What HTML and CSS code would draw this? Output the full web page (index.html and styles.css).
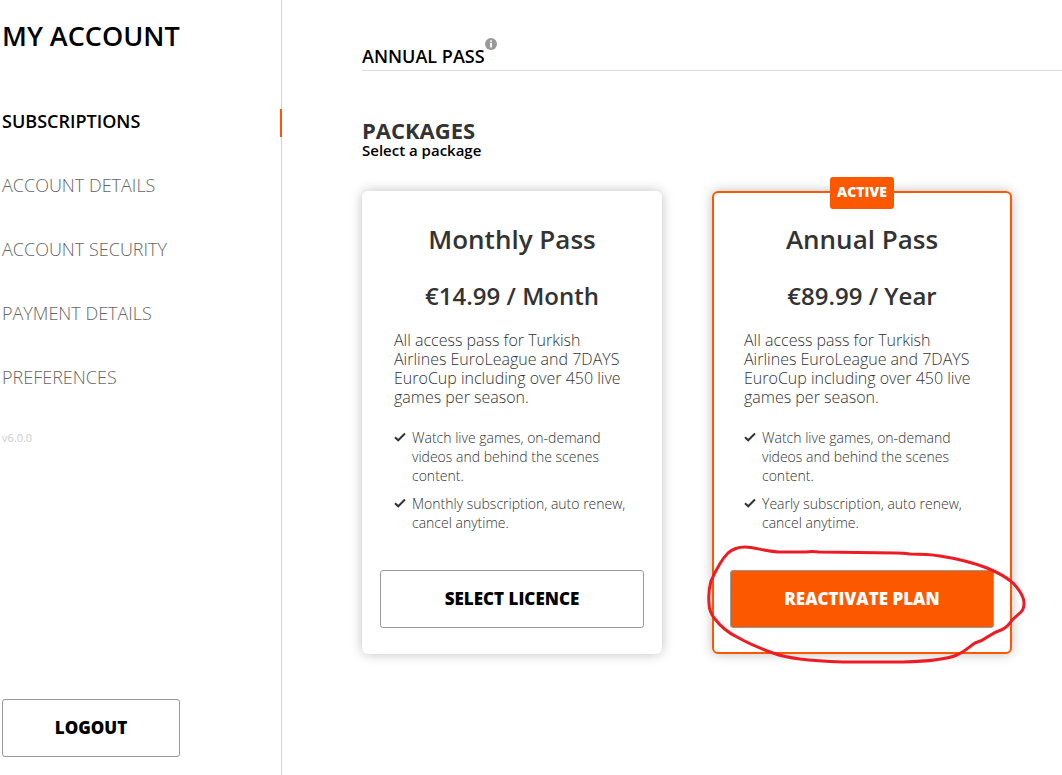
FILE: index.html
```html
<!DOCTYPE html>
<html lang="en">
  <head>
    <meta charset="UTF-8" />
    <meta name="viewport" content="width=device-width, initial-scale=1" />
    <title>My Account</title>
    <link rel="stylesheet" href="styles.css">
  </head>
  <body>
    <div class="account">
      <aside class="sidebar">
        <h1>MY ACCOUNT</h1>
        <nav class="menu">
          <a href="#subscriptions" class="active">SUBSCRIPTIONS</a>
          <a href="#details">ACCOUNT DETAILS</a>
          <a href="#security">ACCOUNT SECURITY</a>
          <a href="#payment">PAYMENT DETAILS</a>
          <a href="#preferences">PREFERENCES</a>
        </nav>
        <p class="version">v6.0.0</p>
        <button type="button" class="btn logout">LOGOUT</button>
      </aside>

      <main class="content">
        <div class="current-plan">
          <h2>ANNUAL PASS</h2>
          <svg class="info" viewBox="0 0 12 12">
            <circle cx="6" cy="6" r="6" fill="#999" />
            <path d="M5.1 2.2h1.8v1.6H5.1zM5.1 4.8h1.8v4.8H5.1z" fill="#fff" />
          </svg>
        </div>

        <h2 class="packages-title">PACKAGES</h2>
        <p class="packages-hint">Select a package</p>

        <div class="packages">
          <section class="card">
            <h3>Monthly Pass</h3>
            <p class="price">€14.99 / Month</p>
            <p class="description">All access pass for Turkish Airlines EuroLeague and 7DAYS EuroCup including over 450 live games per season.</p>
            <ul class="features">
              <li>
                <svg class="check" viewBox="0 0 12 10"><path d="M1 5.2l3.2 3.1L11 1.5" /></svg>
                <span>Watch live games, on-demand videos and behind the scenes content.</span>
              </li>
              <li>
                <svg class="check" viewBox="0 0 12 10"><path d="M1 5.2l3.2 3.1L11 1.5" /></svg>
                <span>Monthly subscription, auto renew, cancel anytime.</span>
              </li>
            </ul>
            <div class="action">
              <button type="button" class="btn">SELECT LICENCE</button>
            </div>
          </section>

          <section class="card card-active">
            <span class="badge">ACTIVE</span>
            <h3>Annual Pass</h3>
            <p class="price">€89.99 / Year</p>
            <p class="description">All access pass for Turkish Airlines EuroLeague and 7DAYS EuroCup including over 450 live games per season.</p>
            <ul class="features">
              <li>
                <svg class="check" viewBox="0 0 12 10"><path d="M1 5.2l3.2 3.1L11 1.5" /></svg>
                <span>Watch live games, on-demand videos and behind the scenes content.</span>
              </li>
              <li>
                <svg class="check" viewBox="0 0 12 10"><path d="M1 5.2l3.2 3.1L11 1.5" /></svg>
                <span>Yearly subscription, auto renew, cancel anytime.</span>
              </li>
            </ul>
            <div class="action">
              <button type="button" class="btn btn-primary">REACTIVATE PLAN</button>
              <svg class="marker" viewBox="0 0 322 122">
                <path d="M39 3C48 3 58 7 72 8L100 8Q106 7 113 8L190 9Q198 9 204 10Q222 10 234 12Q260 16 281 24Q298 31 307 39Q318 51 318 59Q318 65 315 68L306 76Q302 83 295 86Q289 88 283 92Q276 97 269 99C264 102 260 107 251 111Q236 117 197 118L137 118Q110 117 94 115Q78 113 67 109Q45 101 31 93Q17 86 9 75Q3 68 3 59Q2 48 5 37Q14 17 22 9Q29 3 39 3z" />
              </svg>
            </div>
          </section>
        </div>
      </main>
    </div>
  </body>
</html>
```
FILE: styles.css
```css
* {
  box-sizing: border-box;
}

body {
  margin: 0;
  font-family: "Open Sans", "Noto Sans", sans-serif;
  color: #000;
  background-color: #fff;
}

h1,
h2,
h3,
p,
ul {
  margin: 0;
  padding: 0;
}

.account {
  display: flex;
  min-height: 100vh;
}

.sidebar {
  display: flex;
  flex-direction: column;
  flex: 0 0 282px;
  padding: 18px 0 18px 2px;
  border-right: 1px solid #d5d5d5;
}

h1 {
  font-size: 27px;
  line-height: 36px;
  font-weight: 600;
}

.menu {
  display: flex;
  flex-direction: column;
  gap: 36px;
  margin-top: 55px;
}

.menu a {
  padding-bottom: 4px;
  font-size: 18px;
  line-height: 24px;
  font-weight: 300;
  color: #666;
  text-decoration: none;
}

.menu a.active {
  margin-right: -1px;
  border-right: 2px solid #fc5800;
  font-weight: 600;
  color: #000;
}

.version {
  margin-top: 37px;
  font-size: 11px;
  line-height: 16px;
  color: #ccc;
}

.btn {
  width: 100%;
  height: 58px;
  padding: 0 0 2px;
  border: 1px solid #999;
  border-radius: 3px;
  background-color: #fff;
  font-family: inherit;
  font-size: 17px;
  font-weight: 800;
  color: #000;
  cursor: pointer;
}

.btn-primary {
  background-color: #fc5800;
  color: #fff;
}

.logout {
  width: 178px;
  margin-top: auto;
}

.content {
  flex: 1;
  min-width: 0;
  padding: 38px 0 40px 80px;
}

.current-plan {
  display: flex;
  align-items: flex-start;
  border-bottom: 1px solid #ddd;
}

.current-plan h2 {
  padding: 6px 0 2px;
  font-size: 18px;
  line-height: 24px;
  font-weight: 600;
}

.info {
  width: 12px;
  height: 12px;
}

.packages-title {
  margin-top: 48px;
  font-size: 22px;
  line-height: 23px;
  font-weight: 700;
  color: #333;
}

.packages-hint {
  font-size: 15px;
  line-height: 17px;
  font-weight: 600;
}

.packages {
  display: flex;
  flex-wrap: wrap;
  gap: 50px;
  margin-top: 32px;
}

.card {
  position: relative;
  width: 300px;
  padding: 30px 18px 26px;
  border-radius: 6px;
  box-shadow: 0 0 12px rgba(0, 0, 0, 0.25);
  color: #333;
}

.card-active {
  padding: 28px 16px 24px;
  border: 2px solid #fc5800;
}

.badge {
  position: absolute;
  top: -16px;
  left: 50%;
  width: 64px;
  height: 32px;
  margin-left: -32px;
  border-radius: 3px;
  background-color: #fc5800;
  font-size: 14px;
  line-height: 30px;
  font-weight: 800;
  text-align: center;
  color: #fff;
}

h3 {
  font-size: 26px;
  line-height: 36px;
  font-weight: 600;
  text-align: center;
}

.price {
  margin-top: 23px;
  font-size: 24px;
  line-height: 32px;
  font-weight: 600;
  text-align: center;
}

.description {
  margin: 19px 14px 0;
  font-size: 16px;
  line-height: 19px;
  font-weight: 300;
}

.features {
  display: flex;
  flex-direction: column;
  gap: 9px;
  margin: 21px 14px 0;
  list-style: none;
  font-size: 14px;
  line-height: 19px;
  font-weight: 300;
}

.features li {
  display: flex;
  gap: 6px;
}

.check {
  flex: 0 0 12px;
  height: 10px;
  margin-top: 4px;
  fill: none;
  stroke: #333;
  stroke-width: 2;
}

.action {
  position: relative;
  margin-top: 38px;
}

/* hand-drawn ring over the reactivate button */
.marker {
  position: absolute;
  top: -26px;
  left: -24px;
  width: 322px;
  height: 122px;
  fill: none;
  stroke: #ed1c24;
  stroke-width: 3;
  stroke-linejoin: round;
  pointer-events: none;
}
```
